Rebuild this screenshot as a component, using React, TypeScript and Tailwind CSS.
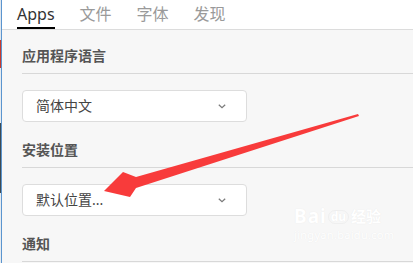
import React from "react";

const font = { fontFamily: '"Noto Sans", "Noto Sans CJK SC", sans-serif' };

function Chevron() {
  return (
    <svg width="8" height="5" viewBox="0 0 8 5" className="shrink-0">
      <polyline points="0.8,0.8 4,3.8 7.2,0.8" fill="none" stroke="#7a7a7a" strokeWidth="1.2" />
    </svg>
  );
}

function Select({ label }: { label: string }) {
  return (
    <div className="mt-[16px] mb-[18px] flex h-[32px] w-[225px] items-center justify-between rounded-[4px] border border-[#dddddd] bg-white pl-[13px] pr-[20px]">
      <span className="text-[14px] leading-5 text-[#444444]">{label}</span>
      <Chevron />
    </div>
  );
}

function Heading({ text }: { text: string }) {
  return (
    <div className="border-b border-[#d8d8d8] pb-[7px] text-[14px] font-bold leading-5 text-[#555555]">
      {text}
    </div>
  );
}

export default function App() {
  const tabs = ["Apps", "文件", "字体", "发现"];
  return (
    <div className="relative flex h-[263px] w-[413px] overflow-hidden bg-[#f7f7f7]" style={font}>
      <div className="flex w-[1px] flex-col">
        <div className="h-[40px] bg-[#dfe6ee]" />
        <div className="h-[28px] bg-[#c83a2e]" />
        <div className="h-[55px] bg-[#e6ebf0]" />
        <div className="h-[70px] bg-[#3d4a52]" />
        <div className="flex-1 bg-[#e6ebf0]" />
      </div>
      <div className="w-[1px] bg-[#5b95cf]" />
      <div className="flex flex-1 flex-col">
        <div className="flex h-[30px] gap-[25px] border-b border-[#dcdcdc] bg-white pl-[15px]">
          {tabs.map((t, i) => (
            <div
              key={t}
              className={
                i === 0
                  ? "flex h-[29px] items-center border-b-2 border-black text-[16px] text-[#333333]"
                  : "flex h-[29px] items-center border-b-2 border-transparent text-[16px] text-[#9a9a9a]"
              }
            >
              {t}
            </div>
          ))}
        </div>
        <div className="flex flex-col pl-[20px] pt-[16px]">
          <Heading text="应用程序语言" />
          <Select label="简体中文" />
          <Heading text="安装位置" />
          <Select label="默认位置..." />
          <Heading text="通知" />
        </div>
      </div>

      <div className="pointer-events-none absolute left-[294px] top-[207px] flex flex-col items-start text-white [text-shadow:0_0_1px_#e6e6e6]">
        <div className="flex items-center leading-none">
          <span className="text-[19px] font-bold tracking-[1px]">Bai</span>
          <span className="ml-[1px] rounded-full border border-[#efefef] px-[2px] text-[12px] font-bold">du</span>
          <span className="ml-[2px] text-[15px] font-bold">经验</span>
        </div>
        <span className="mt-[3px] text-[11px] leading-none tracking-[0.3px]">jingyan.baidu.com</span>
      </div>

      <svg className="pointer-events-none absolute left-0 top-0" width="413" height="263" viewBox="0 0 413 263">
        <polygon
          points="358,114 136,177 123,172 104,191 130,197 136,188 359,116"
          fill="#f83b3b"
        />
      </svg>
    </div>
  );
}
